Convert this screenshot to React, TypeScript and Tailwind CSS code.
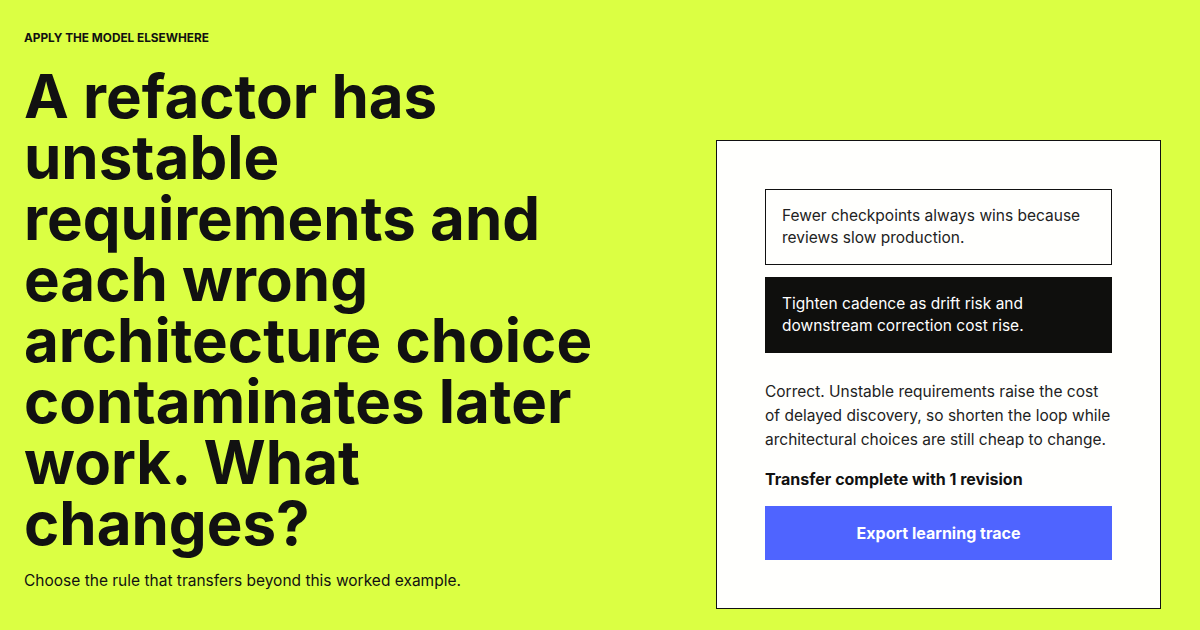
import React from 'react';

const options = [
  { id: 'a', text: 'Fewer checkpoints always wins because reviews slow production.', picked: false },
  { id: 'b', text: 'Tighten cadence as drift risk and downstream correction cost rise.', picked: true },
];

export default function App() {
  return (
    <div
      className="h-[630px] overflow-y-auto bg-[#dbff43] text-[#111111]"
      style={{ fontFamily: 'Inter, "Noto Sans", sans-serif' }}
    >
      <div className="flex items-start justify-between pl-6 pr-[39px] pt-[30px] pb-[22px]">
        {/* left: prompt */}
        <div className="w-[600px]">
          <p className="text-[11.8px] font-bold leading-4 uppercase">Apply the model elsewhere</p>
          <h1 className="mt-5 text-[60px] font-bold leading-[61px] tracking-normal">
            A refactor has unstable requirements and each wrong architecture choice contaminates later work. What changes?
          </h1>
          <p className="mt-4 text-[15.5px] leading-[22px]">Choose the rule that transfers beyond this worked example.</p>
        </div>

        {/* right: answer card */}
        <div className="mt-[110px] w-[445px] border border-[#111111] bg-[#fffffd] p-12">
          <div className="flex flex-col gap-3">
            {options.map((o) => (
              <button
                key={o.id}
                className={
                  o.picked
                    ? 'border border-[#0f0f0d] bg-[#0f0f0d] px-4 py-[15px] text-left text-[15.5px] leading-[22px] text-white'
                    : 'border border-[#111111] bg-[#fffffd] px-4 py-[15px] text-left text-[15.5px] leading-[22px] text-[#222222]'
                }
              >
                {o.text}
              </button>
            ))}
          </div>
          <p className="mt-[27px] text-[15.5px] leading-6 text-[#222222]">
            Correct. Unstable requirements raise the cost of delayed discovery, so shorten the loop while architectural choices are still cheap to change.
          </p>
          <p className="mt-[15px] text-[16px] font-bold leading-6">Transfer complete with 1 revision</p>
          <button className="mt-[15px] h-[54px] w-full bg-[#4f64ff] text-[16px] font-bold text-white">
            Export learning trace
          </button>
        </div>
      </div>
    </div>
  );
}
